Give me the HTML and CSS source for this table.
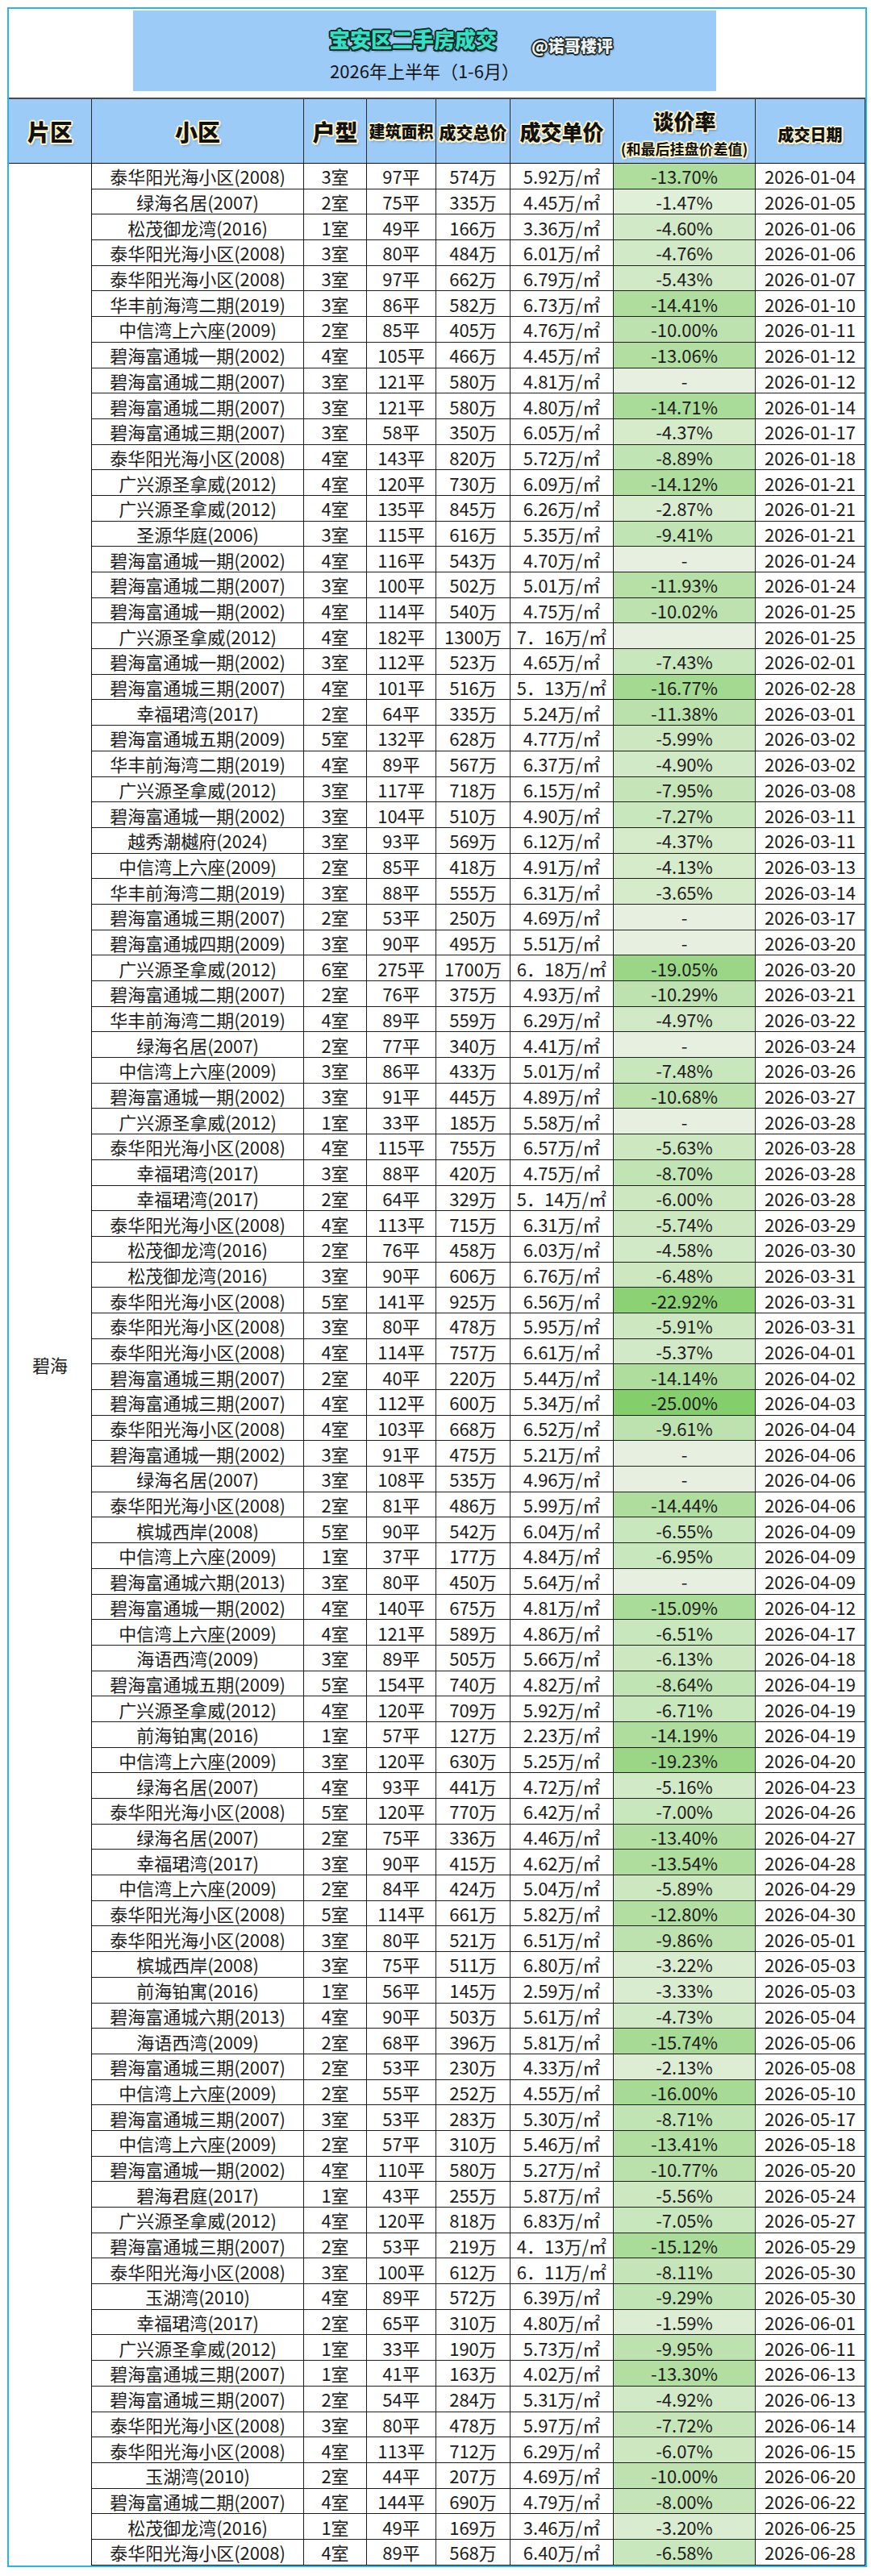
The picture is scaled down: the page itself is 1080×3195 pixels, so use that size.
FILE: index.html
```html
<!DOCTYPE html>
<html lang="zh-CN">
<head>
<meta charset="utf-8">
<title>宝安区二手房成交 2026年上半年</title>
<link rel="stylesheet" href="styles.css">
</head>
<body>
<div class="frame">
  <div class="title-area">
    <div class="title-box">
      <div class="t-row"><span class="t-main">宝安区二手房成交</span><span class="t-handle">@诺哥楼评</span></div>
      <div class="t-sub">2026年上半年（1-6月）</div>
    </div>
  </div>
  <div class="thead">
    <div class="th"><span class="h28">片区</span></div>
    <div class="th"><span class="h28">小区</span></div>
    <div class="th"><span class="h28">户型</span></div>
    <div class="th"><span class="h20">建筑面积</span></div>
    <div class="th"><span class="h21">成交总价</span></div>
    <div class="th"><span class="h26">成交单价</span></div>
    <div class="th th-rate"><span class="h26">谈价率</span><span class="h18">(和最后挂盘价差值)</span></div>
    <div class="th th-date"><span class="h20">成交日期</span></div>
  </div>
  <div class="tbody">
    <div class="area">碧海</div>
    <div class="rows">
      <div class="row"><span>泰华阳光海小区(2008)</span><span>3室</span><span>97平</span><span>574万</span><span>5.92万/㎡</span><span class="rate p14">-13.70%</span><span>2026-01-04</span></div>
      <div class="row"><span>绿海名居(2007)</span><span>2室</span><span>75平</span><span>335万</span><span>4.45万/㎡</span><span class="rate p1">-1.47%</span><span>2026-01-05</span></div>
      <div class="row"><span>松茂御龙湾(2016)</span><span>1室</span><span>49平</span><span>166万</span><span>3.36万/㎡</span><span class="rate p5">-4.60%</span><span>2026-01-06</span></div>
      <div class="row"><span>泰华阳光海小区(2008)</span><span>3室</span><span>80平</span><span>484万</span><span>6.01万/㎡</span><span class="rate p5">-4.76%</span><span>2026-01-06</span></div>
      <div class="row"><span>泰华阳光海小区(2008)</span><span>3室</span><span>97平</span><span>662万</span><span>6.79万/㎡</span><span class="rate p5">-5.43%</span><span>2026-01-07</span></div>
      <div class="row"><span>华丰前海湾二期(2019)</span><span>3室</span><span>86平</span><span>582万</span><span>6.73万/㎡</span><span class="rate p14">-14.41%</span><span>2026-01-10</span></div>
      <div class="row"><span>中信湾上六座(2009)</span><span>2室</span><span>85平</span><span>405万</span><span>4.76万/㎡</span><span class="rate p10">-10.00%</span><span>2026-01-11</span></div>
      <div class="row"><span>碧海富通城一期(2002)</span><span>4室</span><span>105平</span><span>466万</span><span>4.45万/㎡</span><span class="rate p13">-13.06%</span><span>2026-01-12</span></div>
      <div class="row"><span>碧海富通城二期(2007)</span><span>3室</span><span>121平</span><span>580万</span><span>4.81万/㎡</span><span class="rate pz">-</span><span>2026-01-12</span></div>
      <div class="row"><span>碧海富通城二期(2007)</span><span>3室</span><span>121平</span><span>580万</span><span>4.80万/㎡</span><span class="rate p15">-14.71%</span><span>2026-01-14</span></div>
      <div class="row"><span>碧海富通城三期(2007)</span><span>3室</span><span>58平</span><span>350万</span><span>6.05万/㎡</span><span class="rate p4">-4.37%</span><span>2026-01-17</span></div>
      <div class="row"><span>泰华阳光海小区(2008)</span><span>4室</span><span>143平</span><span>820万</span><span>5.72万/㎡</span><span class="rate p9">-8.89%</span><span>2026-01-18</span></div>
      <div class="row"><span>广兴源圣拿威(2012)</span><span>4室</span><span>120平</span><span>730万</span><span>6.09万/㎡</span><span class="rate p14">-14.12%</span><span>2026-01-21</span></div>
      <div class="row"><span>广兴源圣拿威(2012)</span><span>4室</span><span>135平</span><span>845万</span><span>6.26万/㎡</span><span class="rate p3">-2.87%</span><span>2026-01-21</span></div>
      <div class="row"><span>圣源华庭(2006)</span><span>3室</span><span>115平</span><span>616万</span><span>5.35万/㎡</span><span class="rate p9">-9.41%</span><span>2026-01-21</span></div>
      <div class="row"><span>碧海富通城一期(2002)</span><span>4室</span><span>116平</span><span>543万</span><span>4.70万/㎡</span><span class="rate pz">-</span><span>2026-01-24</span></div>
      <div class="row"><span>碧海富通城二期(2007)</span><span>3室</span><span>100平</span><span>502万</span><span>5.01万/㎡</span><span class="rate p12">-11.93%</span><span>2026-01-24</span></div>
      <div class="row"><span>碧海富通城一期(2002)</span><span>4室</span><span>114平</span><span>540万</span><span>4.75万/㎡</span><span class="rate p10">-10.02%</span><span>2026-01-25</span></div>
      <div class="row"><span>广兴源圣拿威(2012)</span><span>4室</span><span>182平</span><span>1300万</span><span>7．16万/㎡</span><span class="rate pz"></span><span>2026-01-25</span></div>
      <div class="row"><span>碧海富通城一期(2002)</span><span>3室</span><span>112平</span><span>523万</span><span>4.65万/㎡</span><span class="rate p7">-7.43%</span><span>2026-02-01</span></div>
      <div class="row"><span>碧海富通城三期(2007)</span><span>4室</span><span>101平</span><span>516万</span><span>5．13万/㎡</span><span class="rate p17">-16.77%</span><span>2026-02-28</span></div>
      <div class="row"><span>幸福珺湾(2017)</span><span>2室</span><span>64平</span><span>335万</span><span>5.24万/㎡</span><span class="rate p11">-11.38%</span><span>2026-03-01</span></div>
      <div class="row"><span>碧海富通城五期(2009)</span><span>5室</span><span>132平</span><span>628万</span><span>4.77万/㎡</span><span class="rate p6">-5.99%</span><span>2026-03-02</span></div>
      <div class="row"><span>华丰前海湾二期(2019)</span><span>4室</span><span>89平</span><span>567万</span><span>6.37万/㎡</span><span class="rate p5">-4.90%</span><span>2026-03-02</span></div>
      <div class="row"><span>广兴源圣拿威(2012)</span><span>3室</span><span>117平</span><span>718万</span><span>6.15万/㎡</span><span class="rate p8">-7.95%</span><span>2026-03-08</span></div>
      <div class="row"><span>碧海富通城一期(2002)</span><span>3室</span><span>104平</span><span>510万</span><span>4.90万/㎡</span><span class="rate p7">-7.27%</span><span>2026-03-11</span></div>
      <div class="row"><span>越秀潮樾府(2024)</span><span>3室</span><span>93平</span><span>569万</span><span>6.12万/㎡</span><span class="rate p4">-4.37%</span><span>2026-03-11</span></div>
      <div class="row"><span>中信湾上六座(2009)</span><span>2室</span><span>85平</span><span>418万</span><span>4.91万/㎡</span><span class="rate p4">-4.13%</span><span>2026-03-13</span></div>
      <div class="row"><span>华丰前海湾二期(2019)</span><span>3室</span><span>88平</span><span>555万</span><span>6.31万/㎡</span><span class="rate p4">-3.65%</span><span>2026-03-14</span></div>
      <div class="row"><span>碧海富通城三期(2007)</span><span>2室</span><span>53平</span><span>250万</span><span>4.69万/㎡</span><span class="rate pz">-</span><span>2026-03-17</span></div>
      <div class="row"><span>碧海富通城四期(2009)</span><span>3室</span><span>90平</span><span>495万</span><span>5.51万/㎡</span><span class="rate pz">-</span><span>2026-03-20</span></div>
      <div class="row"><span>广兴源圣拿威(2012)</span><span>6室</span><span>275平</span><span>1700万</span><span>6．18万/㎡</span><span class="rate p19">-19.05%</span><span>2026-03-20</span></div>
      <div class="row"><span>碧海富通城二期(2007)</span><span>2室</span><span>76平</span><span>375万</span><span>4.93万/㎡</span><span class="rate p10">-10.29%</span><span>2026-03-21</span></div>
      <div class="row"><span>华丰前海湾二期(2019)</span><span>4室</span><span>89平</span><span>559万</span><span>6.29万/㎡</span><span class="rate p5">-4.97%</span><span>2026-03-22</span></div>
      <div class="row"><span>绿海名居(2007)</span><span>2室</span><span>77平</span><span>340万</span><span>4.41万/㎡</span><span class="rate pz">-</span><span>2026-03-24</span></div>
      <div class="row"><span>中信湾上六座(2009)</span><span>3室</span><span>86平</span><span>433万</span><span>5.01万/㎡</span><span class="rate p7">-7.48%</span><span>2026-03-26</span></div>
      <div class="row"><span>碧海富通城一期(2002)</span><span>3室</span><span>91平</span><span>445万</span><span>4.89万/㎡</span><span class="rate p11">-10.68%</span><span>2026-03-27</span></div>
      <div class="row"><span>广兴源圣拿威(2012)</span><span>1室</span><span>33平</span><span>185万</span><span>5.58万/㎡</span><span class="rate pz">-</span><span>2026-03-28</span></div>
      <div class="row"><span>泰华阳光海小区(2008)</span><span>4室</span><span>115平</span><span>755万</span><span>6.57万/㎡</span><span class="rate p6">-5.63%</span><span>2026-03-28</span></div>
      <div class="row"><span>幸福珺湾(2017)</span><span>3室</span><span>88平</span><span>420万</span><span>4.75万/㎡</span><span class="rate p9">-8.70%</span><span>2026-03-28</span></div>
      <div class="row"><span>幸福珺湾(2017)</span><span>2室</span><span>64平</span><span>329万</span><span>5．14万/㎡</span><span class="rate p6">-6.00%</span><span>2026-03-28</span></div>
      <div class="row"><span>泰华阳光海小区(2008)</span><span>4室</span><span>113平</span><span>715万</span><span>6.31万/㎡</span><span class="rate p6">-5.74%</span><span>2026-03-29</span></div>
      <div class="row"><span>松茂御龙湾(2016)</span><span>2室</span><span>76平</span><span>458万</span><span>6.03万/㎡</span><span class="rate p5">-4.58%</span><span>2026-03-30</span></div>
      <div class="row"><span>松茂御龙湾(2016)</span><span>3室</span><span>90平</span><span>606万</span><span>6.76万/㎡</span><span class="rate p6">-6.48%</span><span>2026-03-31</span></div>
      <div class="row"><span>泰华阳光海小区(2008)</span><span>5室</span><span>141平</span><span>925万</span><span>6.56万/㎡</span><span class="rate p23">-22.92%</span><span>2026-03-31</span></div>
      <div class="row"><span>泰华阳光海小区(2008)</span><span>3室</span><span>80平</span><span>478万</span><span>5.95万/㎡</span><span class="rate p6">-5.91%</span><span>2026-03-31</span></div>
      <div class="row"><span>泰华阳光海小区(2008)</span><span>4室</span><span>114平</span><span>757万</span><span>6.61万/㎡</span><span class="rate p5">-5.37%</span><span>2026-04-01</span></div>
      <div class="row"><span>碧海富通城三期(2007)</span><span>2室</span><span>40平</span><span>220万</span><span>5.44万/㎡</span><span class="rate p14">-14.14%</span><span>2026-04-02</span></div>
      <div class="row"><span>碧海富通城三期(2007)</span><span>4室</span><span>112平</span><span>600万</span><span>5.34万/㎡</span><span class="rate p25">-25.00%</span><span>2026-04-03</span></div>
      <div class="row"><span>泰华阳光海小区(2008)</span><span>4室</span><span>103平</span><span>668万</span><span>6.52万/㎡</span><span class="rate p10">-9.61%</span><span>2026-04-04</span></div>
      <div class="row"><span>碧海富通城一期(2002)</span><span>3室</span><span>91平</span><span>475万</span><span>5.21万/㎡</span><span class="rate pz">-</span><span>2026-04-06</span></div>
      <div class="row"><span>绿海名居(2007)</span><span>3室</span><span>108平</span><span>535万</span><span>4.96万/㎡</span><span class="rate pz">-</span><span>2026-04-06</span></div>
      <div class="row"><span>泰华阳光海小区(2008)</span><span>2室</span><span>81平</span><span>486万</span><span>5.99万/㎡</span><span class="rate p14">-14.44%</span><span>2026-04-06</span></div>
      <div class="row"><span>槟城西岸(2008)</span><span>5室</span><span>90平</span><span>542万</span><span>6.04万/㎡</span><span class="rate p7">-6.55%</span><span>2026-04-09</span></div>
      <div class="row"><span>中信湾上六座(2009)</span><span>1室</span><span>37平</span><span>177万</span><span>4.84万/㎡</span><span class="rate p7">-6.95%</span><span>2026-04-09</span></div>
      <div class="row"><span>碧海富通城六期(2013)</span><span>3室</span><span>80平</span><span>450万</span><span>5.64万/㎡</span><span class="rate pz">-</span><span>2026-04-09</span></div>
      <div class="row"><span>碧海富通城一期(2002)</span><span>4室</span><span>140平</span><span>675万</span><span>4.81万/㎡</span><span class="rate p15">-15.09%</span><span>2026-04-12</span></div>
      <div class="row"><span>中信湾上六座(2009)</span><span>4室</span><span>121平</span><span>589万</span><span>4.86万/㎡</span><span class="rate p7">-6.51%</span><span>2026-04-17</span></div>
      <div class="row"><span>海语西湾(2009)</span><span>3室</span><span>89平</span><span>505万</span><span>5.66万/㎡</span><span class="rate p6">-6.13%</span><span>2026-04-18</span></div>
      <div class="row"><span>碧海富通城五期(2009)</span><span>5室</span><span>154平</span><span>740万</span><span>4.82万/㎡</span><span class="rate p9">-8.64%</span><span>2026-04-19</span></div>
      <div class="row"><span>广兴源圣拿威(2012)</span><span>4室</span><span>120平</span><span>709万</span><span>5.92万/㎡</span><span class="rate p7">-6.71%</span><span>2026-04-19</span></div>
      <div class="row"><span>前海铂寓(2016)</span><span>1室</span><span>57平</span><span>127万</span><span>2.23万/㎡</span><span class="rate p14">-14.19%</span><span>2026-04-19</span></div>
      <div class="row"><span>中信湾上六座(2009)</span><span>3室</span><span>120平</span><span>630万</span><span>5.25万/㎡</span><span class="rate p19">-19.23%</span><span>2026-04-20</span></div>
      <div class="row"><span>绿海名居(2007)</span><span>4室</span><span>93平</span><span>441万</span><span>4.72万/㎡</span><span class="rate p5">-5.16%</span><span>2026-04-23</span></div>
      <div class="row"><span>泰华阳光海小区(2008)</span><span>5室</span><span>120平</span><span>770万</span><span>6.42万/㎡</span><span class="rate p7">-7.00%</span><span>2026-04-26</span></div>
      <div class="row"><span>绿海名居(2007)</span><span>2室</span><span>75平</span><span>336万</span><span>4.46万/㎡</span><span class="rate p13">-13.40%</span><span>2026-04-27</span></div>
      <div class="row"><span>幸福珺湾(2017)</span><span>3室</span><span>90平</span><span>415万</span><span>4.62万/㎡</span><span class="rate p14">-13.54%</span><span>2026-04-28</span></div>
      <div class="row"><span>中信湾上六座(2009)</span><span>2室</span><span>84平</span><span>424万</span><span>5.04万/㎡</span><span class="rate p6">-5.89%</span><span>2026-04-29</span></div>
      <div class="row"><span>泰华阳光海小区(2008)</span><span>5室</span><span>114平</span><span>661万</span><span>5.82万/㎡</span><span class="rate p13">-12.80%</span><span>2026-04-30</span></div>
      <div class="row"><span>泰华阳光海小区(2008)</span><span>3室</span><span>80平</span><span>521万</span><span>6.51万/㎡</span><span class="rate p10">-9.86%</span><span>2026-05-01</span></div>
      <div class="row"><span>槟城西岸(2008)</span><span>3室</span><span>75平</span><span>511万</span><span>6.80万/㎡</span><span class="rate p3">-3.22%</span><span>2026-05-03</span></div>
      <div class="row"><span>前海铂寓(2016)</span><span>1室</span><span>56平</span><span>145万</span><span>2.59万/㎡</span><span class="rate p3">-3.33%</span><span>2026-05-03</span></div>
      <div class="row"><span>碧海富通城六期(2013)</span><span>4室</span><span>90平</span><span>503万</span><span>5.61万/㎡</span><span class="rate p5">-4.73%</span><span>2026-05-04</span></div>
      <div class="row"><span>海语西湾(2009)</span><span>2室</span><span>68平</span><span>396万</span><span>5.81万/㎡</span><span class="rate p16">-15.74%</span><span>2026-05-06</span></div>
      <div class="row"><span>碧海富通城三期(2007)</span><span>2室</span><span>53平</span><span>230万</span><span>4.33万/㎡</span><span class="rate p2">-2.13%</span><span>2026-05-08</span></div>
      <div class="row"><span>中信湾上六座(2009)</span><span>2室</span><span>55平</span><span>252万</span><span>4.55万/㎡</span><span class="rate p16">-16.00%</span><span>2026-05-10</span></div>
      <div class="row"><span>碧海富通城三期(2007)</span><span>3室</span><span>53平</span><span>283万</span><span>5.30万/㎡</span><span class="rate p9">-8.71%</span><span>2026-05-17</span></div>
      <div class="row"><span>中信湾上六座(2009)</span><span>2室</span><span>57平</span><span>310万</span><span>5.46万/㎡</span><span class="rate p13">-13.41%</span><span>2026-05-18</span></div>
      <div class="row"><span>碧海富通城一期(2002)</span><span>4室</span><span>110平</span><span>580万</span><span>5.27万/㎡</span><span class="rate p11">-10.77%</span><span>2026-05-20</span></div>
      <div class="row"><span>碧海君庭(2017)</span><span>1室</span><span>43平</span><span>255万</span><span>5.87万/㎡</span><span class="rate p6">-5.56%</span><span>2026-05-24</span></div>
      <div class="row"><span>广兴源圣拿威(2012)</span><span>4室</span><span>120平</span><span>818万</span><span>6.83万/㎡</span><span class="rate p7">-7.05%</span><span>2026-05-27</span></div>
      <div class="row"><span>碧海富通城三期(2007)</span><span>2室</span><span>53平</span><span>219万</span><span>4．13万/㎡</span><span class="rate p15">-15.12%</span><span>2026-05-29</span></div>
      <div class="row"><span>泰华阳光海小区(2008)</span><span>3室</span><span>100平</span><span>612万</span><span>6．11万/㎡</span><span class="rate p8">-8.11%</span><span>2026-05-30</span></div>
      <div class="row"><span>玉湖湾(2010)</span><span>4室</span><span>89平</span><span>572万</span><span>6.39万/㎡</span><span class="rate p9">-9.29%</span><span>2026-05-30</span></div>
      <div class="row"><span>幸福珺湾(2017)</span><span>2室</span><span>65平</span><span>310万</span><span>4.80万/㎡</span><span class="rate p2">-1.59%</span><span>2026-06-01</span></div>
      <div class="row"><span>广兴源圣拿威(2012)</span><span>1室</span><span>33平</span><span>190万</span><span>5.73万/㎡</span><span class="rate p10">-9.95%</span><span>2026-06-11</span></div>
      <div class="row"><span>碧海富通城三期(2007)</span><span>1室</span><span>41平</span><span>163万</span><span>4.02万/㎡</span><span class="rate p13">-13.30%</span><span>2026-06-13</span></div>
      <div class="row"><span>碧海富通城三期(2007)</span><span>2室</span><span>54平</span><span>284万</span><span>5.31万/㎡</span><span class="rate p5">-4.92%</span><span>2026-06-13</span></div>
      <div class="row"><span>泰华阳光海小区(2008)</span><span>3室</span><span>80平</span><span>478万</span><span>5.97万/㎡</span><span class="rate p8">-7.72%</span><span>2026-06-14</span></div>
      <div class="row"><span>泰华阳光海小区(2008)</span><span>4室</span><span>113平</span><span>712万</span><span>6.29万/㎡</span><span class="rate p6">-6.07%</span><span>2026-06-15</span></div>
      <div class="row"><span>玉湖湾(2010)</span><span>2室</span><span>44平</span><span>207万</span><span>4.69万/㎡</span><span class="rate p10">-10.00%</span><span>2026-06-20</span></div>
      <div class="row"><span>碧海富通城二期(2007)</span><span>4室</span><span>144平</span><span>690万</span><span>4.79万/㎡</span><span class="rate p8">-8.00%</span><span>2026-06-22</span></div>
      <div class="row"><span>松茂御龙湾(2016)</span><span>1室</span><span>49平</span><span>169万</span><span>3.46万/㎡</span><span class="rate p3">-3.20%</span><span>2026-06-25</span></div>
      <div class="row"><span>泰华阳光海小区(2008)</span><span>4室</span><span>89平</span><span>568万</span><span>6.40万/㎡</span><span class="rate p7">-6.58%</span><span>2026-06-28</span></div>
    </div>
  </div>
</div>
</body>
</html>
```

FILE: styles.css
```css
* { box-sizing: border-box; }
html, body { margin: 0; padding: 0; background: #ffffff; }
body {
  font-family: "Noto Sans CJK SC", "Noto Sans", sans-serif;
  color: #1c1c1c;
}

.frame {
  width: 1066px;
  margin: 9px 0 0 9px;
  border: 2px solid #2bb4e8;
  background: #ffffff;
}

/* ---------- title ---------- */
.title-area {
  height: 110px;
  padding: 2px 0 0 154px;
}
.title-box {
  width: 723px;
  height: 100px;
  background: #9ccbf8;
  overflow: visible;
}
.t-row {
  display: flex;
  align-items: flex-start;
  height: 30px;
  margin-top: 0;
  padding: 20px 0 0 243px;
  box-sizing: content-box;
}
.t-main {
  font-size: 26px;
  line-height: 30px;
  font-weight: 900;
  color: #33e0c4;
  white-space: nowrap;
  text-shadow:
    -1.5px -1.5px 0 #0d2a28, 1.5px -1.5px 0 #0d2a28,
    -1.5px 1.5px 0 #0d2a28, 1.5px 1.5px 0 #0d2a28,
    0 -2px 0 #0d2a28, 0 2px 0 #0d2a28,
    -2px 0 0 #0d2a28, 2px 0 0 #0d2a28,
    2px 3px 2px rgba(0,0,0,0.35);
}
.t-handle {
  margin: 12px 0 0 43px;
  font-size: 20px;
  line-height: 24px;
  font-weight: 900;
  color: #eef3f3;
  white-space: nowrap;
  text-shadow:
    -1.2px -1.2px 0 #1e2a2a, 1.2px -1.2px 0 #1e2a2a,
    -1.2px 1.2px 0 #1e2a2a, 1.2px 1.2px 0 #1e2a2a,
    0 -1.6px 0 #1e2a2a, 0 1.6px 0 #1e2a2a,
    -1.6px 0 0 #1e2a2a, 1.6px 0 0 #1e2a2a,
    2px 2px 2px rgba(0,0,0,0.35);
}
.t-sub {
  margin-top: 9px;
  font-size: 22px;
  line-height: 30px;
  text-align: center;
  color: #151515;
  white-space: nowrap;
}

/* ---------- header ---------- */
.thead {
  display: grid;
  grid-template-columns: 103px 263px 78px 86px 92px 128px 176px 136px;
  height: 82px;
  border-top: 2px solid #4a4a4a;
  border-bottom: 1px solid #111111;
  background: #9ccbf8;
}
.th {
  display: flex;
  flex-direction: column;
  align-items: center;
  justify-content: center;
  border-right: 1px solid #2a2a2a;
  font-weight: 900;
  color: #111111;
  white-space: nowrap;
  text-shadow:
    -1.5px -1.5px 0 #fff4c8, 1.5px -1.5px 0 #fff4c8,
    -1.5px 1.5px 0 #fff4c8, 1.5px 1.5px 0 #fff4c8,
    0 -2px 0 #fff4c8, 0 2px 0 #fff4c8,
    -2px 0 0 #fff4c8, 2px 0 0 #fff4c8,
    2px 3px 3px rgba(0,0,0,0.3);
}
.th-rate { justify-content: flex-start; padding-top: 12px; }
.th-date { padding-top: 9px; }
.h28 { font-size: 28px; line-height: 32px; }
.h26 { font-size: 26px; line-height: 30px; }
.h21 { font-size: 21px; line-height: 26px; }
.h20 { font-size: 20px; line-height: 26px; }
.h18 { font-size: 18px; line-height: 24px; margin-top: 7px; font-weight: 700; }

/* ---------- body ---------- */
.tbody {
  display: grid;
  grid-template-columns: 103px 1fr;
}
.area {
  display: flex;
  align-items: center;
  justify-content: center;
  border-right: 1px solid #111111;
  font-size: 22px;
  color: #1c1c1c;
}
.row {
  display: grid;
  grid-template-columns: 263px 78px 86px 92px 128px 176px 136px;
  height: 31.7px;
  border-bottom: 1px solid #1e1e1e;
}
.row > span {
  display: flex;
  align-items: center;
  justify-content: center;
  border-right: 1px solid #1e1e1e;
  font-size: 22px;
  line-height: 1;
  white-space: nowrap;
  overflow: hidden;
}

/* 谈价率 colour scale (by rounded percentage) */
.pz  { background: #e6efe0; }
.p1  { background: #e0efd8; }
.p2  { background: #dcedd3; }
.p3  { background: #d9eccf; }
.p4  { background: #d5ebca; }
.p5  { background: #d1e9c6; }
.p6  { background: #cde8c1; }
.p7  { background: #c9e7bd; }
.p8  { background: #c5e5b8; }
.p9  { background: #c1e4b4; }
.p10 { background: #bee2af; }
.p11 { background: #bae1ab; }
.p12 { background: #b6e0a6; }
.p13 { background: #b2dea2; }
.p14 { background: #aedd9d; }
.p15 { background: #aadc99; }
.p16 { background: #a7da94; }
.p17 { background: #a3d990; }
.p19 { background: #9bd687; }
.p23 { background: #8cd174; }
.p25 { background: #84ce6c; }
```
